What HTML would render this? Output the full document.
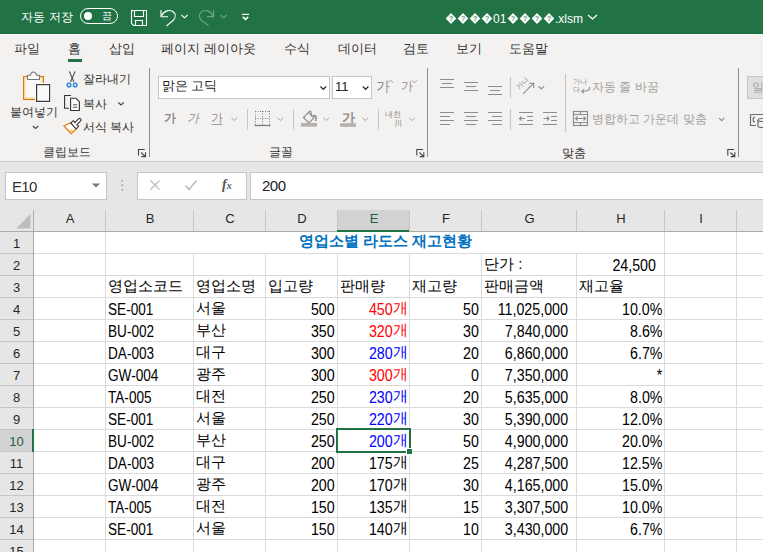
<!DOCTYPE html><html><head><meta charset="utf-8"><style>*{box-sizing:content-box}
html,body{margin:0;padding:0;width:763px;height:552px;overflow:hidden;background:#e6e6e6;font-family:"Liberation Sans",sans-serif;position:relative}
div{position:absolute}
#grid{left:0;top:0;width:763px;height:552px}
.hdrbg{background:#e6e6e6}
.hl{left:34px;width:729px;height:1px;background:#dadada}
.hlh{left:0;width:33px;height:1px;background:#c6c6c6}
.vl{width:1px;background:#dadada}
.vlh{top:210px;height:21px;width:1px;background:#c6c6c6}
.clab{top:210px;height:21px;line-height:21px;text-align:center;font-size:12px;color:#262626}
.rlab{left:0;width:33px;height:22px;line-height:23px;text-align:center;font-size:12px;color:#262626}
.sel{color:#1d5f3a}
.cell{height:22px;line-height:22px;font-size:15px;color:#000;white-space:nowrap}
.num{letter-spacing:-0.8px}
.red{color:#ff0000}
.blue{color:#0000ff}
.title{height:22px;line-height:22px;text-align:center;font-size:15px;font-weight:bold;color:#0070c0}
.t{position:absolute;white-space:nowrap}
.tab{top:40px;font-size:13px;line-height:17px;color:#333;white-space:nowrap}
.rt{font-size:12px;line-height:16px;color:#333;white-space:nowrap}
svg{position:absolute}
.gi{color:#8f8d8b}
.gi2{color:#a19f9d}
.n{display:inline-block;font-size:16px;position:relative;top:2px}
.clab{top:208px;font-size:13px;margin-left:1px}
.rlab{font-size:13px;margin-top:1px}
</style></head><body>
<div style="left:0;top:0;width:763px;height:33px;background:#217346;border-bottom:1px solid #1b6a3c"></div><div style="left:0;top:34px;width:763px;height:1px;background:#fbfbfa;z-index:1"></div>
<div class="t" style="left:20.5px;top:9px;font-size:12.3px;line-height:16px;color:#fff;letter-spacing:0.1px;word-spacing:1px">자동 저장</div>
<svg style="position:absolute;left:0;top:0" width="763" height="33">
 <rect x="80.5" y="8.5" width="37" height="15" rx="7.5" fill="none" stroke="#fff" stroke-width="1"/>
 <circle cx="88" cy="16" r="4" fill="#fff"/>
 <g fill="none" stroke="#fff" stroke-width="1.1">
  <path d="M131.5,10.5 H146.5 V25.5 H133.5 L131.5,23.5 Z"/>
  <path d="M134.5,10.5 V16.5 H143.5 V10.5"/>
  <path d="M135.5,25.5 V20.5 H142.5 V25.5"/>
  <path d="M161,10 V16.8 H168"/>
  <path d="M161.5,16 C163.5,11 170,8.5 174,12.5 C176.5,15 175,18.5 173,20.5 L166.5,26"/>
  <path d="M181.5,15 L184.5,17.8 L187.5,15"/>
 </g>
 <g fill="none" stroke="rgba(255,255,255,0.35)" stroke-width="1.1">
  <path d="M213.6,10 V16.6 H207"/>
  <path d="M213,16 C211,11 204.5,8.5 200.8,12.5 C198.3,15 199.5,18.5 201.5,20.5 L208.5,25.5"/>
  <path d="M220.5,15 L223.5,17.8 L226.5,15"/>
 </g>
 <path d="M242,14.4 H249" stroke="#fff" stroke-width="1.2"/>
 <path d="M242.8,16.8 L245.5,19.3 L248.2,16.8" fill="none" stroke="#fff" stroke-width="1.6"/>
 <path d="M588,15 L592.5,19 L597,15" fill="none" stroke="#fff" stroke-width="1.3"/>
</svg>
<div class="t" style="left:102px;top:10px;font-size:10px;line-height:12px;color:#fff">끔</div>
<svg style="left:0;top:0" width="763" height="33"><path d="M445.7,18.5 L451,13 L456.3,18.5 L451,24 Z" fill="#fff"/><text x="451" y="21.3" font-size="7.5" font-weight="bold" text-anchor="middle" fill="#5e9a78" font-family="Liberation Sans">?</text><path d="M457.7,18.5 L463,13 L468.3,18.5 L463,24 Z" fill="#fff"/><text x="463" y="21.3" font-size="7.5" font-weight="bold" text-anchor="middle" fill="#5e9a78" font-family="Liberation Sans">?</text><path d="M469.7,18.5 L475,13 L480.3,18.5 L475,24 Z" fill="#fff"/><text x="475" y="21.3" font-size="7.5" font-weight="bold" text-anchor="middle" fill="#5e9a78" font-family="Liberation Sans">?</text><path d="M481.7,18.5 L487,13 L492.3,18.5 L487,24 Z" fill="#fff"/><text x="487" y="21.3" font-size="7.5" font-weight="bold" text-anchor="middle" fill="#5e9a78" font-family="Liberation Sans">?</text><path d="M507.7,18.5 L513,13 L518.3,18.5 L513,24 Z" fill="#fff"/><text x="513" y="21.3" font-size="7.5" font-weight="bold" text-anchor="middle" fill="#5e9a78" font-family="Liberation Sans">?</text><path d="M519.7,18.5 L525,13 L530.3,18.5 L525,24 Z" fill="#fff"/><text x="525" y="21.3" font-size="7.5" font-weight="bold" text-anchor="middle" fill="#5e9a78" font-family="Liberation Sans">?</text><path d="M531.7,18.5 L537,13 L542.3,18.5 L537,24 Z" fill="#fff"/><text x="537" y="21.3" font-size="7.5" font-weight="bold" text-anchor="middle" fill="#5e9a78" font-family="Liberation Sans">?</text><path d="M543.7,18.5 L549,13 L554.3,18.5 L549,24 Z" fill="#fff"/><text x="549" y="21.3" font-size="7.5" font-weight="bold" text-anchor="middle" fill="#5e9a78" font-family="Liberation Sans">?</text></svg>
<div class="t" style="left:493px;top:12px;font-size:12px;line-height:14px;color:#fff">01</div>
<div class="t" style="left:555px;top:12px;font-size:12px;line-height:14px;color:#fff">.xlsm</div>

<div style="left:0;top:35px;width:763px;height:126px;background:#f3f2f1"></div>
<div style="left:0;top:161px;width:763px;height:1px;background:#d2d0ce"></div>
<!-- tabs -->
<div class="tab" style="left:14px">파일</div>
<div class="tab" style="left:68px">홈</div>
<div style="left:68px;top:59px;width:14px;height:3px;background:#217346"></div>
<div class="tab" style="left:109px">삽입</div>
<div class="tab" style="left:161px">페이지 레이아웃</div>
<div class="tab" style="left:284px">수식</div>
<div class="tab" style="left:338px">데이터</div>
<div class="tab" style="left:403px">검토</div>
<div class="tab" style="left:456px">보기</div>
<div class="tab" style="left:509px">도움말</div>

<!-- clipboard group -->
<svg style="position:absolute;left:0;top:62px" width="763" height="100">
 <g transform="translate(0,-62)">
 <!-- paste -->
 <rect x="23.6" y="76.6" width="19.8" height="22.8" fill="#f8f8f8" stroke="#e07b12" stroke-width="1.3"/>
 <path d="M25,78 V98 H42 V78" fill="none" stroke="#fbd58a" stroke-width="1"/>
 <path d="M27.5,79.5 V75.3 H30.5 C30.8,72.9 32,72 33.5,72 C35,72 36.2,72.9 36.5,75.3 H39.5 V79.5 Z" fill="#fff" stroke="#7a7a7a" stroke-width="1.1"/>
 <rect x="35" y="83" width="16" height="20" fill="#fff"/>
 <rect x="36.6" y="84.6" width="13" height="16.8" fill="#f9f9f9" stroke="#3a3a3a" stroke-width="1.2"/>
 <path d="M32.8,126 L35.6,128.5 L38.4,126" fill="none" stroke="#444" stroke-width="1.1"/>
 <!-- scissors -->
 <path d="M69.3,71.4 L73.9,82 M75.2,71.4 L70.5,82" stroke="#4a4a4a" stroke-width="1.1" fill="none"/>
 <circle cx="69" cy="85" r="1.8" fill="#fff" stroke="#2b88d8" stroke-width="1.5"/>
 <circle cx="75.2" cy="85" r="1.8" fill="#fff" stroke="#2b88d8" stroke-width="1.5"/>
 <!-- copy -->
 <path d="M71,95.5 H64.6 V108.2 H69" fill="none" stroke="#333" stroke-width="1.1"/>
 <path d="M70.6,98.3 H76 L79.4,101.7 V110.5 H70.6 Z" fill="#fff" stroke="#333" stroke-width="1.1"/>
 <path d="M73,104.8 H77.3 M73,107.3 H77.3" stroke="#555" stroke-width="1"/>
 <!-- format painter -->
 <path d="M64,126 L71,122.5 L76.5,129 L71,133.5 Z" fill="#fff" stroke="#e07b12" stroke-width="1.3"/>
 <path d="M68.5,129.3 L74.5,130.3 L71,133 Z" fill="#fbd07a"/>
 <path d="M70.8,123.2 L73.3,120.7 L78.6,126.3 L76.1,128.8 Z" fill="#fff" stroke="#333" stroke-width="1.1"/>
 <path d="M74.6,122.9 L78.6,118.9 A1.4,1.4 0 0 1 80.6,120.9 L76.6,124.9" fill="#fff" stroke="#333" stroke-width="1.1"/>
 <path d="M118.3,102.5 L121,105 L123.7,102.5" fill="none" stroke="#444" stroke-width="1.1"/>
 <path d="M138.5,155.6 V149.5 H144.8 M141.1,152.5 L145.3,156.6 M145.5,152.3 V156.6 H141.4" fill="none" stroke="#444" stroke-width="1.1"/>
 <path d="M149.5,68 V157" stroke="#8f8d8b" stroke-width="1"/>
 </g>
</svg>
<div class="rt" style="left:10px;top:104px">붙여넣기</div>
<div class="rt" style="left:83px;top:71px">잘라내기</div>
<div class="rt" style="left:83px;top:96px">복사</div>
<div class="rt" style="left:83px;top:119px">서식 복사</div>
<div class="rt" style="left:43px;top:144px">클립보드</div>
<!-- font group -->
<div style="left:158px;top:76px;width:170px;height:21px;background:#fff;border:1px solid #c8c6c4"></div>
<div class="t" style="left:162px;top:78px;font-size:12.6px;line-height:17px;color:#222">맑은 고딕</div>
<div style="left:332px;top:76px;width:38px;height:21px;background:#fff;border:1px solid #c8c6c4"></div>
<div class="t" style="left:335px;top:78px;font-size:13px;line-height:17px;color:#222">11</div>
<div class="t gi" style="left:376px;top:79px;font-size:13.5px;line-height:15px">가</div>
<div class="t gi" style="left:401px;top:80px;font-size:12px;line-height:13px">가</div>
<div class="t gi" style="left:164px;top:111px;font-size:12px;line-height:14px;font-weight:bold">가</div>
<div class="t gi" style="left:187px;top:111px;font-size:12px;line-height:14px;font-style:italic">가</div>
<div class="t gi" style="left:211px;top:111px;font-size:12px;line-height:14px">가</div>
<div class="t gi" style="left:342px;top:111px;font-size:13px;line-height:14px;font-weight:bold">가</div>
<div class="t gi" style="left:385px;top:110px;font-size:8px;line-height:9px">내천</div>
<div class="t gi" style="left:394px;top:119px;font-size:8px;line-height:9px">川</div>
<div class="rt" style="left:269px;top:144px">글꼴</div>
<svg style="left:0;top:62px" width="763" height="100">
 <g transform="translate(0,-62)">
 <g fill="none" stroke="#222" stroke-width="1.2">
  <path d="M320.5,86.5 L323.3,89.3 L326.1,86.5"/>
  <path d="M362.8,86.5 L365.6,89.3 L368.4,86.5"/>
 </g>
 <g fill="none" stroke="#a3a19f" stroke-width="1">
  <path d="M388,82.5 L390.5,80.3 L393,82.5"/>
  <path d="M412.3,80.3 L414.6,82.8 L417,80.3"/>
  <path d="M211.5,124.5 H222.5"/>
  <path d="M231.5,117.8 L234.3,120.5 L237.1,117.8"/>
  <path d="M277.5,117.8 L280.3,120.5 L283.1,117.8"/>
  <path d="M323.5,117.8 L326.3,120.5 L329.1,117.8"/>
  <path d="M362.5,117.8 L365.3,120.5 L368.1,117.8"/>
  <path d="M409,117.8 L411.8,120.5 L414.6,117.8"/>
  <path d="M255,111.5 H270 M255,118.5 H270 M255.5,111 V126 M262.5,111 V126 M269.5,111 V126" stroke="#7d7b79" stroke-dasharray="1,1.5"/>
  <path d="M254.5,125.5 H270.5" stroke="#7d7b79" stroke-width="1.3"/>
  <path d="M247.5,109 V129.5 M293.5,109.5 V129.5 M378.5,109 V129.5" stroke="#c8c6c4"/>
  <path d="M303.5,117.5 L308.6,112.4 L314,117.8 L308.9,122.9 Z" fill="#f0f0f0" stroke="#8a8886" stroke-width="1.1"/>
  <path d="M308.6,112.4 C308.8,110.6 311.2,110.6 311.2,112.4 V116.5" stroke="#8a8886" stroke-width="1.1"/><path d="M313,116.5 C314.5,114.5 316.5,115.5 316,118.5 L315.6,121" stroke="#8a8886" stroke-width="1.5"/>
  
 </g>
 <rect x="301" y="123" width="16" height="3.6" fill="#b3b0ad"/>
 <rect x="340" y="123.3" width="16" height="3.5" fill="#b3b0ad"/>
 <path d="M427.5,68 V157" stroke="#8f8d8b" stroke-width="1"/><path d="M416.8,155.6 V149.5 H423.1 M419.40000000000003,152.5 L423.6,156.6 M423.8,152.3 V156.6 H419.7" fill="none" stroke="#444" stroke-width="1.1"/>
 <!-- alignment -->
 <g fill="none" stroke="#8f8d8b" stroke-width="1.1">
  <path d="M440,79.5 H454 M442,83.5 H452 M440,87.5 H454"/>
  <path d="M464,82.5 H478 M466,86.5 H476 M464,90.5 H478"/>
  <path d="M488,86.5 H502 M490,90.5 H500 M488,94.5 H502"/>
  <path d="M440,112.5 H454 M440,116.5 H450 M440,120.5 H454 M440,124.5 H450"/>
  <path d="M464,112.5 H478 M466,116.5 H476 M464,120.5 H478 M466,124.5 H476"/>
  <path d="M488,112.5 H502 M492,116.5 H502 M488,120.5 H502 M492,124.5 H502"/>
  <path d="M519,112.5 H533 M527,116.5 H533 M527,120.5 H533 M519,124.5 H533 M525,118.5 H519.5 M521.5,116.5 L519.5,118.5 L521.5,120.5"/>
  <path d="M543,112.5 H557 M551,116.5 H557 M551,120.5 H557 M543,124.5 H557 M543.5,118.5 H549 M547,116.5 L549,118.5 L547,120.5"/>
  <path d="M523,93.8 L533.7,83.2 M529,83.2 H533.7 V88"/>
  <path d="M538.4,86.2 L541.3,89 L544.2,86.2"/>
  <path d="M589.5,87 C590.5,90 587,91.5 582,91.3 M584,89.3 L581.8,91.3 L584,93.3"/>
  <rect x="573.5" y="111.5" width="14" height="14" stroke-width="1.2"/>
  <path d="M573.5,114.5 H587.5 M573.5,122.5 H587.5 M580.5,111.5 V114.5 M580.5,122.5 V125.5 M575.5,118.5 H585.5 M577.5,116.5 L575.5,118.5 L577.5,120.5 M583.5,116.5 L585.5,118.5 L583.5,120.5"/>
  <path d="M510.5,77 V98 M510.5,109 V130 M565.5,74 V132" stroke="#c8c6c4"/>
  <path d="M719,117.8 L721.7,120.6 L724.4,117.8"/>
  
 </g>
 <path d="M738.5,68 V157" stroke="#8f8d8b" stroke-width="1"/><path d="M727.8,155.6 V149.5 H734.0999999999999 M730.4,152.5 L734.5999999999999,156.6 M734.8,152.3 V156.6 H730.6999999999999" fill="none" stroke="#444" stroke-width="1.1"/>
 <rect x="747.5" y="76.5" width="20" height="22" fill="#e1dfdd" stroke="#c8c6c4"/>
 <g fill="none" stroke="#6f6d6b" stroke-width="1.2">
  <path d="M750.5,114.5 H763 M750.5,114.5 V125.5 H756 M755,117 C752.5,117 752.5,122 755,122"/>
  <ellipse cx="762" cy="120" rx="4" ry="1.5"/>
  <path d="M758,120 V126 C758,128 766,128 766,126 V120"/>
 </g>
 </g>
</svg>
<div class="t gi" style="left:520px;top:83px;font-size:7px;line-height:8px;transform:rotate(-45deg);transform-origin:0 100%">가나</div>
<div class="t gi" style="left:573px;top:78px;font-size:7px;line-height:8px">가나</div>
<div class="t gi" style="left:573px;top:86px;font-size:7px;line-height:8px">다</div>
<div class="t gi2" style="left:592px;top:79px;font-size:12px;line-height:16px">자동 줄 바꿈</div>
<div class="t gi2" style="left:592px;top:111px;font-size:12px;line-height:16px">병합하고 가운데 맞춤</div>
<div class="rt" style="left:562px;top:145px">맞춤</div>
<div class="t" style="left:752px;top:80px;font-size:11.5px;line-height:15px;color:#aaa8a6">일</div>
<!-- formula bar -->
<div style="left:5px;top:172px;width:100px;height:26px;background:#fff;border:1px solid #c6c6c6"></div>
<div class="t" style="left:12px;top:178px;font-size:15px;line-height:17px;color:#333;letter-spacing:-0.7px">E10</div>
<div style="left:137px;top:172px;width:108px;height:26px;background:#fff;border:1px solid #c6c6c6"></div>
<div style="left:250px;top:172px;width:520px;height:26px;background:#fff;border:1px solid #c6c6c6"></div>
<div class="t" style="left:262px;top:177px;font-size:15px;line-height:17px;color:#222;letter-spacing:-0.5px">200</div>
<svg style="left:0;top:160px" width="300" height="50">
 <g transform="translate(0,-160)">
 <path d="M92,183.5 H100 L96,187.5 Z" fill="#777"/>
 <g fill="#999"><rect x="121.5" y="180" width="1.5" height="1.5"/><rect x="121.5" y="184.5" width="1.5" height="1.5"/><rect x="121.5" y="189" width="1.5" height="1.5"/></g>
 <path d="M150.5,180.5 L159.5,189.5 M159.5,180.5 L150.5,189.5" stroke="#bdbdbd" stroke-width="1.3"/>
 <path d="M185.5,185.5 L189,189.5 L196.5,180.5" fill="none" stroke="#bdbdbd" stroke-width="1.6"/>
 </g>
</svg>
<div class="t" style="left:222px;top:176px;font-size:14px;line-height:17px;color:#555;font-family:'Liberation Serif',serif;font-style:italic;font-weight:bold">f<span style="font-size:10px">x</span></div>

<div id="grid">
<div class="hdrbg" style="left:0;top:210px;width:763px;height:21px"></div>
<div style="position:absolute;left:337px;top:210px;width:72px;height:21px;background:#d2d2d2"></div>
<div style="position:absolute;left:0;top:429px;width:33px;height:22px;background:#d2d2d2"></div>
<div class="hdrbg" style="left:0;top:231px;width:33px;height:321px"></div>
<div style="position:absolute;left:0;top:429px;width:33px;height:22px;background:#d2d2d2"></div>
<div style="position:absolute;left:34px;top:232px;width:729px;height:320px;background:#fff"></div>
<div class="hl" style="top:253px"></div>
<div class="hlh" style="top:253px"></div>
<div class="hl" style="top:275px"></div>
<div class="hlh" style="top:275px"></div>
<div class="hl" style="top:297px"></div>
<div class="hlh" style="top:297px"></div>
<div class="hl" style="top:319px"></div>
<div class="hlh" style="top:319px"></div>
<div class="hl" style="top:341px"></div>
<div class="hlh" style="top:341px"></div>
<div class="hl" style="top:363px"></div>
<div class="hlh" style="top:363px"></div>
<div class="hl" style="top:385px"></div>
<div class="hlh" style="top:385px"></div>
<div class="hl" style="top:407px"></div>
<div class="hlh" style="top:407px"></div>
<div class="hl" style="top:429px"></div>
<div class="hlh" style="top:429px"></div>
<div class="hl" style="top:451px"></div>
<div class="hlh" style="top:451px"></div>
<div class="hl" style="top:473px"></div>
<div class="hlh" style="top:473px"></div>
<div class="hl" style="top:495px"></div>
<div class="hlh" style="top:495px"></div>
<div class="hl" style="top:517px"></div>
<div class="hlh" style="top:517px"></div>
<div class="hl" style="top:539px"></div>
<div class="hlh" style="top:539px"></div>
<div class="vl" style="left:105px;top:231px;height:321px"></div>
<div class="vlh" style="left:105px"></div>
<div class="vl" style="left:193px;top:254px;height:298px"></div>
<div class="vlh" style="left:193px"></div>
<div class="vl" style="left:265px;top:254px;height:298px"></div>
<div class="vlh" style="left:265px"></div>
<div class="vl" style="left:337px;top:254px;height:298px"></div>
<div class="vlh" style="left:337px"></div>
<div class="vl" style="left:409px;top:254px;height:298px"></div>
<div class="vlh" style="left:409px"></div>
<div class="vl" style="left:481px;top:254px;height:298px"></div>
<div class="vlh" style="left:481px"></div>
<div class="vl" style="left:576px;top:254px;height:298px"></div>
<div class="vlh" style="left:576px"></div>
<div class="vl" style="left:664px;top:231px;height:321px"></div>
<div class="vlh" style="left:664px"></div>
<div class="vl" style="left:736px;top:231px;height:321px"></div>
<div class="vlh" style="left:736px"></div>
<div style="position:absolute;left:33px;top:210px;width:1px;height:342px;background:#ababab"></div>
<div style="position:absolute;left:0;top:231px;width:763px;height:1px;background:#ababab"></div>
<svg style="left:0;top:200px" width="40" height="32"><path d="M30.5,214 V228.5 H16 Z" transform="translate(0,-200)" fill="#bdbdbd"/></svg>
<div class="clab" style="left:33px;width:72px">A</div>
<div class="clab" style="left:105px;width:88px">B</div>
<div class="clab" style="left:193px;width:72px">C</div>
<div class="clab" style="left:265px;width:72px">D</div>
<div class="clab sel" style="left:337px;width:72px">E</div>
<div class="clab" style="left:409px;width:72px">F</div>
<div class="clab" style="left:481px;width:95px">G</div>
<div class="clab" style="left:576px;width:88px">H</div>
<div class="clab" style="left:664px;width:72px">I</div>
<div class="clab" style="left:736px;width:72px">J</div>
<div class="rlab" style="top:231px">1</div>
<div class="rlab" style="top:253px">2</div>
<div class="rlab" style="top:275px">3</div>
<div class="rlab" style="top:297px">4</div>
<div class="rlab" style="top:319px">5</div>
<div class="rlab" style="top:341px">6</div>
<div class="rlab" style="top:363px">7</div>
<div class="rlab" style="top:385px">8</div>
<div class="rlab" style="top:407px">9</div>
<div class="rlab sel" style="top:429px">10</div>
<div class="rlab" style="top:451px">11</div>
<div class="rlab" style="top:473px">12</div>
<div class="rlab" style="top:495px">13</div>
<div class="rlab" style="top:517px">14</div>
<div class="rlab" style="top:539px">15</div>
<div style="position:absolute;left:337px;top:230px;width:72px;height:2px;background:#217346"></div>
<div style="position:absolute;left:32px;top:429px;width:2px;height:23px;background:#217346"></div>
<div class="title" style="left:106px;width:559px;top:230px">영업소별 라도스 재고현황</div>
<div class="cell " style="left:484px;top:253px">단가 :</div>
<div class="cell " style="right:107px;top:253px"><span class="n" style="transform:scaleX(0.89);transform-origin:100% 50%">24,500</span></div>
<div class="cell " style="left:108px;top:275px">영업소코드</div>
<div class="cell " style="left:196px;top:275px">영업소명</div>
<div class="cell " style="left:268px;top:275px">입고량</div>
<div class="cell " style="left:340px;top:275px">판매량</div>
<div class="cell " style="left:412px;top:275px">재고량</div>
<div class="cell " style="left:484px;top:275px">판매금액</div>
<div class="cell " style="left:579px;top:275px">재고율</div>
<div class="cell " style="left:108px;top:297px"><span class="n" style="transform:scaleX(0.85);transform-origin:0 50%">SE-001</span></div>
<div class="cell " style="left:196px;top:297px">서울</div>
<div class="cell " style="right:428px;top:297px"><span class="n" style="transform:scaleX(0.89);transform-origin:100% 50%">500</span></div>
<div class="cell red" style="right:355px;top:297px"><span class="n" style="transform:scaleX(0.89);transform-origin:100% 50%">450</span><span class="gae">개</span></div>
<div class="cell " style="right:284px;top:297px"><span class="n" style="transform:scaleX(0.89);transform-origin:100% 50%">50</span></div>
<div class="cell " style="right:195px;top:297px"><span class="n" style="transform:scaleX(0.89);transform-origin:100% 50%">11,025,000</span></div>
<div class="cell " style="right:101px;top:297px"><span class="n" style="transform:scaleX(0.89);transform-origin:100% 50%">10.0%</span></div>
<div class="cell " style="left:108px;top:319px"><span class="n" style="transform:scaleX(0.85);transform-origin:0 50%">BU-002</span></div>
<div class="cell " style="left:196px;top:319px">부산</div>
<div class="cell " style="right:428px;top:319px"><span class="n" style="transform:scaleX(0.89);transform-origin:100% 50%">350</span></div>
<div class="cell red" style="right:355px;top:319px"><span class="n" style="transform:scaleX(0.89);transform-origin:100% 50%">320</span><span class="gae">개</span></div>
<div class="cell " style="right:284px;top:319px"><span class="n" style="transform:scaleX(0.89);transform-origin:100% 50%">30</span></div>
<div class="cell " style="right:195px;top:319px"><span class="n" style="transform:scaleX(0.89);transform-origin:100% 50%">7,840,000</span></div>
<div class="cell " style="right:101px;top:319px"><span class="n" style="transform:scaleX(0.89);transform-origin:100% 50%">8.6%</span></div>
<div class="cell " style="left:108px;top:341px"><span class="n" style="transform:scaleX(0.85);transform-origin:0 50%">DA-003</span></div>
<div class="cell " style="left:196px;top:341px">대구</div>
<div class="cell " style="right:428px;top:341px"><span class="n" style="transform:scaleX(0.89);transform-origin:100% 50%">300</span></div>
<div class="cell blue" style="right:355px;top:341px"><span class="n" style="transform:scaleX(0.89);transform-origin:100% 50%">280</span><span class="gae">개</span></div>
<div class="cell " style="right:284px;top:341px"><span class="n" style="transform:scaleX(0.89);transform-origin:100% 50%">20</span></div>
<div class="cell " style="right:195px;top:341px"><span class="n" style="transform:scaleX(0.89);transform-origin:100% 50%">6,860,000</span></div>
<div class="cell " style="right:101px;top:341px"><span class="n" style="transform:scaleX(0.89);transform-origin:100% 50%">6.7%</span></div>
<div class="cell " style="left:108px;top:363px"><span class="n" style="transform:scaleX(0.85);transform-origin:0 50%">GW-004</span></div>
<div class="cell " style="left:196px;top:363px">광주</div>
<div class="cell " style="right:428px;top:363px"><span class="n" style="transform:scaleX(0.89);transform-origin:100% 50%">300</span></div>
<div class="cell red" style="right:355px;top:363px"><span class="n" style="transform:scaleX(0.89);transform-origin:100% 50%">300</span><span class="gae">개</span></div>
<div class="cell " style="right:284px;top:363px"><span class="n" style="transform:scaleX(0.89);transform-origin:100% 50%">0</span></div>
<div class="cell " style="right:195px;top:363px"><span class="n" style="transform:scaleX(0.89);transform-origin:100% 50%">7,350,000</span></div>
<div class="cell " style="right:101px;top:363px"><span class="n" style="transform:scaleX(0.89);transform-origin:100% 50%">*</span></div>
<div class="cell " style="left:108px;top:385px"><span class="n" style="transform:scaleX(0.85);transform-origin:0 50%">TA-005</span></div>
<div class="cell " style="left:196px;top:385px">대전</div>
<div class="cell " style="right:428px;top:385px"><span class="n" style="transform:scaleX(0.89);transform-origin:100% 50%">250</span></div>
<div class="cell blue" style="right:355px;top:385px"><span class="n" style="transform:scaleX(0.89);transform-origin:100% 50%">230</span><span class="gae">개</span></div>
<div class="cell " style="right:284px;top:385px"><span class="n" style="transform:scaleX(0.89);transform-origin:100% 50%">20</span></div>
<div class="cell " style="right:195px;top:385px"><span class="n" style="transform:scaleX(0.89);transform-origin:100% 50%">5,635,000</span></div>
<div class="cell " style="right:101px;top:385px"><span class="n" style="transform:scaleX(0.89);transform-origin:100% 50%">8.0%</span></div>
<div class="cell " style="left:108px;top:407px"><span class="n" style="transform:scaleX(0.85);transform-origin:0 50%">SE-001</span></div>
<div class="cell " style="left:196px;top:407px">서울</div>
<div class="cell " style="right:428px;top:407px"><span class="n" style="transform:scaleX(0.89);transform-origin:100% 50%">250</span></div>
<div class="cell blue" style="right:355px;top:407px"><span class="n" style="transform:scaleX(0.89);transform-origin:100% 50%">220</span><span class="gae">개</span></div>
<div class="cell " style="right:284px;top:407px"><span class="n" style="transform:scaleX(0.89);transform-origin:100% 50%">30</span></div>
<div class="cell " style="right:195px;top:407px"><span class="n" style="transform:scaleX(0.89);transform-origin:100% 50%">5,390,000</span></div>
<div class="cell " style="right:101px;top:407px"><span class="n" style="transform:scaleX(0.89);transform-origin:100% 50%">12.0%</span></div>
<div class="cell " style="left:108px;top:429px"><span class="n" style="transform:scaleX(0.85);transform-origin:0 50%">BU-002</span></div>
<div class="cell " style="left:196px;top:429px">부산</div>
<div class="cell " style="right:428px;top:429px"><span class="n" style="transform:scaleX(0.89);transform-origin:100% 50%">250</span></div>
<div class="cell blue" style="right:355px;top:429px"><span class="n" style="transform:scaleX(0.89);transform-origin:100% 50%">200</span><span class="gae">개</span></div>
<div class="cell " style="right:284px;top:429px"><span class="n" style="transform:scaleX(0.89);transform-origin:100% 50%">50</span></div>
<div class="cell " style="right:195px;top:429px"><span class="n" style="transform:scaleX(0.89);transform-origin:100% 50%">4,900,000</span></div>
<div class="cell " style="right:101px;top:429px"><span class="n" style="transform:scaleX(0.89);transform-origin:100% 50%">20.0%</span></div>
<div class="cell " style="left:108px;top:451px"><span class="n" style="transform:scaleX(0.85);transform-origin:0 50%">DA-003</span></div>
<div class="cell " style="left:196px;top:451px">대구</div>
<div class="cell " style="right:428px;top:451px"><span class="n" style="transform:scaleX(0.89);transform-origin:100% 50%">200</span></div>
<div class="cell " style="right:355px;top:451px"><span class="n" style="transform:scaleX(0.89);transform-origin:100% 50%">175</span><span class="gae">개</span></div>
<div class="cell " style="right:284px;top:451px"><span class="n" style="transform:scaleX(0.89);transform-origin:100% 50%">25</span></div>
<div class="cell " style="right:195px;top:451px"><span class="n" style="transform:scaleX(0.89);transform-origin:100% 50%">4,287,500</span></div>
<div class="cell " style="right:101px;top:451px"><span class="n" style="transform:scaleX(0.89);transform-origin:100% 50%">12.5%</span></div>
<div class="cell " style="left:108px;top:473px"><span class="n" style="transform:scaleX(0.85);transform-origin:0 50%">GW-004</span></div>
<div class="cell " style="left:196px;top:473px">광주</div>
<div class="cell " style="right:428px;top:473px"><span class="n" style="transform:scaleX(0.89);transform-origin:100% 50%">200</span></div>
<div class="cell " style="right:355px;top:473px"><span class="n" style="transform:scaleX(0.89);transform-origin:100% 50%">170</span><span class="gae">개</span></div>
<div class="cell " style="right:284px;top:473px"><span class="n" style="transform:scaleX(0.89);transform-origin:100% 50%">30</span></div>
<div class="cell " style="right:195px;top:473px"><span class="n" style="transform:scaleX(0.89);transform-origin:100% 50%">4,165,000</span></div>
<div class="cell " style="right:101px;top:473px"><span class="n" style="transform:scaleX(0.89);transform-origin:100% 50%">15.0%</span></div>
<div class="cell " style="left:108px;top:495px"><span class="n" style="transform:scaleX(0.85);transform-origin:0 50%">TA-005</span></div>
<div class="cell " style="left:196px;top:495px">대전</div>
<div class="cell " style="right:428px;top:495px"><span class="n" style="transform:scaleX(0.89);transform-origin:100% 50%">150</span></div>
<div class="cell " style="right:355px;top:495px"><span class="n" style="transform:scaleX(0.89);transform-origin:100% 50%">135</span><span class="gae">개</span></div>
<div class="cell " style="right:284px;top:495px"><span class="n" style="transform:scaleX(0.89);transform-origin:100% 50%">15</span></div>
<div class="cell " style="right:195px;top:495px"><span class="n" style="transform:scaleX(0.89);transform-origin:100% 50%">3,307,500</span></div>
<div class="cell " style="right:101px;top:495px"><span class="n" style="transform:scaleX(0.89);transform-origin:100% 50%">10.0%</span></div>
<div class="cell " style="left:108px;top:517px"><span class="n" style="transform:scaleX(0.85);transform-origin:0 50%">SE-001</span></div>
<div class="cell " style="left:196px;top:517px">서울</div>
<div class="cell " style="right:428px;top:517px"><span class="n" style="transform:scaleX(0.89);transform-origin:100% 50%">150</span></div>
<div class="cell " style="right:355px;top:517px"><span class="n" style="transform:scaleX(0.89);transform-origin:100% 50%">140</span><span class="gae">개</span></div>
<div class="cell " style="right:284px;top:517px"><span class="n" style="transform:scaleX(0.89);transform-origin:100% 50%">10</span></div>
<div class="cell " style="right:195px;top:517px"><span class="n" style="transform:scaleX(0.89);transform-origin:100% 50%">3,430,000</span></div>
<div class="cell " style="right:101px;top:517px"><span class="n" style="transform:scaleX(0.89);transform-origin:100% 50%">6.7%</span></div>
<div style="position:absolute;left:336px;top:428px;width:71px;height:21px;border:2px solid #217346"></div>
<div style="position:absolute;left:406px;top:448px;width:7px;height:7px;background:#fff"></div>
<div style="position:absolute;left:407px;top:449px;width:5px;height:5px;background:#217346"></div>
</div></body></html>
